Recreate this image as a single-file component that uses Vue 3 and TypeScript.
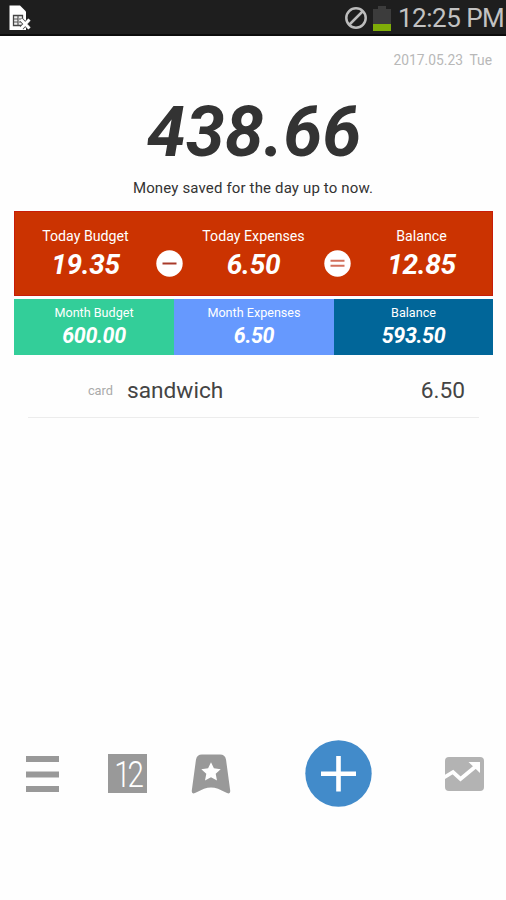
<script setup lang="ts">
interface Amount {
  label: string
  value: string
  tone?: string
}

const today: Amount[] = [
  { label: 'Today Budget', value: '19.35' },
  { label: 'Today Expenses', value: '6.50' },
  { label: 'Balance', value: '12.85' },
]

const month: Amount[] = [
  { label: 'Month Budget', value: '600.00', tone: 'green' },
  { label: 'Month Expenses', value: '6.50', tone: 'blue' },
  { label: 'Balance', value: '593.50', tone: 'navy' },
]

const entries = [{ method: 'card', name: 'sandwich', amount: '6.50' }]
</script>

<template>
  <div class="screen">
    <header class="status">
      <svg class="sim" width="24" height="28" viewBox="0 0 24 28">
        <path d="M1.500 1.500H12l6 6V26H1.500z" fill="#fff" />
        <path d="M5.500 11.500h9v10h-9z" fill="#eee" stroke="#444" stroke-width="1.300" />
        <path d="M6 15h3.500M6 18h3.500M11 15h4M11 18h4M10 11.500v10" stroke="#555" stroke-width="1.200" />
        <path d="M13.500 16l7.500 8M21 16l-7.500 8" stroke="#444" stroke-width="4.400" />
        <path d="M13 15.500l8.500 9M21.500 15.500l-8.500 9" stroke="#fff" stroke-width="3" />
      </svg>
      <svg class="blocked" width="24" height="24" viewBox="0 0 24 24" fill="none" stroke="#bcbcbc" stroke-width="2.500">
        <circle cx="12" cy="12" r="9.700" />
        <path d="M5.500 18.500l13-13" />
      </svg>
      <svg class="battery" width="18" height="25" viewBox="0 0 18 25">
        <path d="M0 3h5V0h8v3h5v15H0z" fill="#3c3c3c" />
        <path d="M0 18h18v7H0z" fill="#7fad08" />
      </svg>
      <span class="clock">12:25 PM</span>
    </header>

    <div class="date">2017.05.23&nbsp; Tue</div>
    <div class="total">438.66</div>
    <div class="caption">Money saved for the day up to now.</div>

    <section class="today">
      <template v-for="(item, i) in today" :key="i">
        <svg v-if="i > 0" class="operator" width="27" height="27" viewBox="0 0 27 27">
          <circle cx="13.500" cy="13.500" r="13.200" fill="#fff" />
          <path v-if="i === 1" d="M6.500 13.500h14" stroke="#a83a2a" stroke-width="2" />
          <path v-else d="M6.500 10.700h14M6.500 15.700h14" stroke="#d2705c" stroke-width="2" />
        </svg>
        <div class="amount">
          <div class="label">{{ item.label }}</div>
          <div class="value">{{ item.value }}</div>
        </div>
      </template>
    </section>

    <section class="month">
      <div v-for="(item, i) in month" :key="i" class="cell" :class="item.tone">
        <div class="label">{{ item.label }}</div>
        <div class="value">{{ item.value }}</div>
      </div>
    </section>

    <ul class="entries">
      <li v-for="entry in entries" :key="entry.name">
        <span class="method">{{ entry.method }}</span>
        <span class="name">{{ entry.name }}</span>
        <span class="sum">{{ entry.amount }}</span>
      </li>
    </ul>

    <nav class="toolbar">
      <svg class="menu" width="33" height="38" viewBox="0 0 33 38">
        <path d="M0 4h33M0 19.500h33M0 34h33" stroke="#999" stroke-width="6" />
      </svg>
      <div class="calendar"><span>12</span></div>
      <svg class="badge" width="40" height="40" viewBox="0 0 40 40">
        <path d="M11 .5h18q5 0 6 5l4.200 31q.4 4-3.200 2.500l-9-4.200Q20 32 13 34.800L4 39Q.4 40.500.8 36.500L5 5.500q1-5 6-5z" fill="#999" />
        <path d="M20 8.300l2.900 6 6.800.9-5 4.600 1.300 6.700-6-3.200-6 3.200 1.300-6.700-5-4.600 6.800-.9z" fill="#fff" />
      </svg>
      <svg class="add" width="67" height="67" viewBox="0 0 67 67">
        <circle cx="33.500" cy="33.500" r="33.200" fill="#428bca" />
        <path d="M16 33.700h35M33.500 16v35.500" stroke="#fff" stroke-width="4.600" />
      </svg>
      <svg class="chart" width="39" height="34" viewBox="0 0 39 34">
        <rect width="39" height="34" rx="4" fill="#b3b3b3" />
        <path d="M-1 20.500l9-5.500 7.500 7L30 10" fill="none" stroke="#fff" stroke-width="3.800" />
        <path d="M23.500 5H35v11z" fill="#fff" />
      </svg>
    </nav>
  </div>
</template>

<style>
body {
  margin: 0;
  background: #fff;
}
</style>

<style scoped>
.screen {
  width: 506px;
  height: 900px;
  overflow: hidden;
  display: flex;
  flex-direction: column;
  background: #fefefe;
  font-family: Roboto, sans-serif;
  color: #333;
  white-space: nowrap;
}
.status {
  height: 36px;
  flex: none;
  box-sizing: border-box;
  border-bottom: 2px solid #0c0c0c;
  background: #1e1e1e;
  display: flex;
  align-items: center;
  padding: 1px 0 0 8px;
}
.blocked {
  margin-left: auto;
}
.battery {
  margin: 2px 7px 0 5px;
}
.clock {
  color: #c2c2c2;
  font-size: 26px;
  letter-spacing: -0.5px;
  line-height: 34px;
  width: 108px;
}
.date {
  height: 20px;
  margin: 14px 14px 0 0;
  text-align: right;
  font-size: 13.8px;
  line-height: 20px;
  color: #b8b8b8;
}
.total {
  height: 80px;
  margin-top: 22px;
  padding-left: 2px;
  text-align: center;
  font-size: 70px;
  line-height: 80px;
  font-weight: 700;
  font-style: italic;
}
.caption {
  height: 20px;
  margin-top: 6px;
  text-align: center;
  font-size: 15px;
  letter-spacing: 0.15px;
  line-height: 20px;
}
.today {
  flex: none;
  display: flex;
  align-items: flex-start;
  height: 85px;
  box-sizing: border-box;
  margin: 13px 13px 0 14px;
  background: #cb3301;
  border: 1px solid #c81c08;
  color: #fff;
}
.operator {
  flex: none;
  margin-top: 38px;
}
.amount {
  flex: 1;
  text-align: center;
  padding-top: 14px;
}
.amount .label {
  font-size: 14.2px;
  line-height: 20px;
}
.amount .value {
  font-size: 28px;
  letter-spacing: -0.3px;
  line-height: 32px;
  margin-top: 3px;
  font-weight: 700;
  font-style: italic;
}
.month {
  flex: none;
  display: grid;
  grid-template-columns: 160px 160px 1fr;
  height: 55.5px;
  margin: 3px 13px 0 14px;
  color: #fff;
  text-align: center;
}
.cell .label {
  font-size: 12.6px;
  line-height: 16px;
  padding-top: 6px;
}
.cell .value {
  font-size: 21.5px;
  letter-spacing: -0.4px;
  line-height: 26px;
  margin-top: 2px;
  font-weight: 700;
  font-style: italic;
}
.green {
  background: #33ce99;
}
.blue {
  background: #6699fe;
}
.navy {
  background: #016699;
}
.entries {
  list-style: none;
  margin: 8.5px 27px 0 28px;
  padding: 0;
}
.entries li {
  box-sizing: border-box;
  display: flex;
  align-items: center;
  height: 55px;
  padding-top: 2px;
  line-height: 52px;
  border-bottom: 1px solid #ececec;
}
.method {
  width: 85px;
  text-align: right;
  font-size: 12.8px;
  color: #aaa;
}
.name {
  margin-left: 14px;
  font-size: 22.7px;
  color: #444;
}
.sum {
  margin-left: auto;
  margin-right: 14px;
  font-size: 22.7px;
  color: #444;
}
.toolbar {
  display: flex;
  align-items: center;
  height: 68px;
  margin-top: auto;
  margin-bottom: 92.5px;
  padding: 0 22px 0 26px;
}
.calendar {
  width: 39px;
  height: 39px;
  margin-left: 49px;
  background: #999;
  color: #fff;
  font-weight: 300;
  font-size: 37px;
  line-height: 41px;
  letter-spacing: -4px;
  display: flex;
  justify-content: center;
}
.calendar span {
  transform: scaleX(0.8);
}
.badge {
  margin-left: 44px;
}
.add {
  margin-left: 73.5px;
}
.chart {
  margin-left: auto;
}
</style>
